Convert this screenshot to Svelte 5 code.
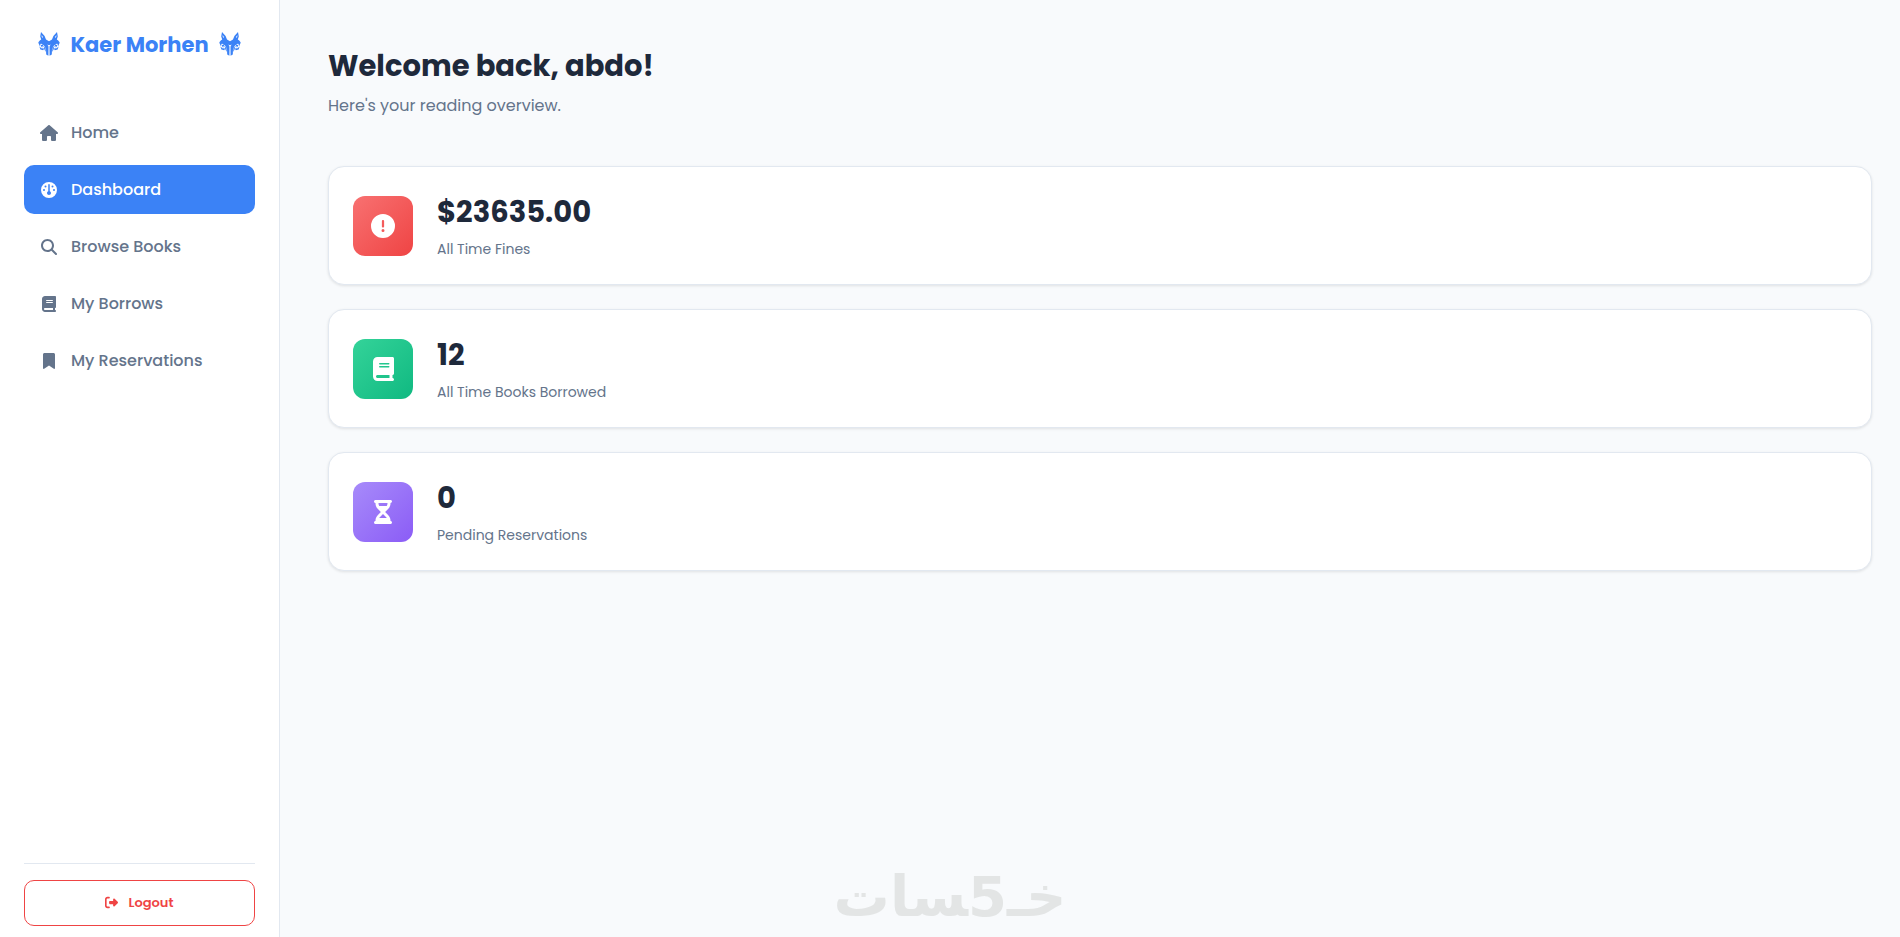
<script>
  const icons = {
    home: {
      w: 576,
      d: 'M575.8 255.5c0 18-15 32.1-32 32.1h-32l.7 160.2c0 2.7-.2 5.4-.5 8.1V472c0 22.1-17.9 40-40 40H456c-1.1 0-2.2 0-3.3-.1c-1.4 .1-2.8 .1-4.2 .1H416 392c-22.1 0-40-17.9-40-40V448 384c0-17.7-14.3-32-32-32H256c-17.7 0-32 14.3-32 32v64 24c0 22.1-17.9 40-40 40H160 128.1c-1.5 0-3-.1-4.5-.2c-1.2 .1-2.4 .2-3.6 .2H104c-22.1 0-40-17.9-40-40V360c0-.9 0-1.9 .1-2.8V287.6H32c-18 0-32-14-32-32.1c0-9 3-17 10-24L266.4 8c7-7 15-8 22-8s15 2 21 7L564.8 231.5c8 7 12 15 11 24z'
    },
    gauge: {
      w: 512,
      d: 'M0 256a256 256 0 1 1 512 0A256 256 0 1 1 0 256zM256 416c35.3 0 64-28.7 64-64c0-26.9-16.5-49.9-40-59.3V88c0-13.3-10.7-24-24-24s-24 10.7-24 24V292.7c-23.5 9.5-40 32.5-40 59.3c0 35.3 28.7 64 64 64zM176 144a32 32 0 1 0 -64 0 32 32 0 1 0 64 0zM96 288a32 32 0 1 0 0-64 32 32 0 1 0 0 64zM448 256a32 32 0 1 0 -64 0 32 32 0 1 0 64 0zM368 176a32 32 0 1 0 0-64 32 32 0 1 0 0 64z'
    },
    search: {
      w: 512,
      d: 'M416 208c0 45.9-14.9 88.3-40 122.7L502.6 457.4c12.5 12.5 12.5 32.8 0 45.3s-32.8 12.5-45.3 0L330.7 376c-34.4 25.2-76.8 40-122.7 40C93.1 416 0 322.9 0 208S93.1 0 208 0S416 93.1 416 208zM208 352a144 144 0 1 0 0-288 144 144 0 1 0 0 288z'
    },
    book: {
      w: 448,
      d: 'M96 0C43 0 0 43 0 96V416c0 53 43 96 96 96H384h32c17.7 0 32-14.3 32-32s-14.3-32-32-32V384c17.7 0 32-14.3 32-32V32c0-17.7-14.3-32-32-32H384 96zm0 384H352v64H96c-17.7 0-32-14.3-32-32s14.3-32 32-32zm32-240c0-8.8 7.2-16 16-16H336c8.8 0 16 7.2 16 16s-7.2 16-16 16H144c-8.8 0-16-7.2-16-16zm16 48H336c8.8 0 16 7.2 16 16s-7.2 16-16 16H144c-8.8 0-16-7.2-16-16s7.2-16 16-16z'
    },
    bookmark: {
      w: 384,
      d: 'M0 48V487.7C0 501.1 10.9 512 24.3 512c5 0 9.9-1.5 14-4.4L192 400 345.7 507.6c4.1 2.9 9 4.4 14 4.4c13.4 0 24.3-10.9 24.3-24.3V48c0-26.5-21.5-48-48-48H48C21.5 0 0 21.5 0 48z'
    },
    alert: {
      w: 512,
      d: 'M256 512A256 256 0 1 0 256 0a256 256 0 1 0 0 512zm0-384c13.3 0 24 10.7 24 24V264c0 13.3-10.7 24-24 24s-24-10.7-24-24V152c0-13.3 10.7-24 24-24zM224 352a32 32 0 1 1 64 0 32 32 0 1 1 -64 0z'
    },
    hourglass: {
      w: 384,
      d: 'M32 0C14.3 0 0 14.3 0 32S14.3 64 32 64V75c0 42.4 16.9 83.1 46.9 113.1L146.7 256 78.9 323.9C48.9 353.9 32 394.6 32 437v11c-17.7 0-32 14.3-32 32s14.3 32 32 32H64 320h32c17.7 0 32-14.3 32-32s-14.3-32-32-32V437c0-42.4-16.9-83.1-46.9-113.1L237.3 256l67.9-67.9c30-30 46.9-70.7 46.9-113.1V64c17.7 0 32-14.3 32-32s-14.3-32-32-32H320 64 32zM96 75V64H288V75c0 19-5.6 37.4-16 53H112c-10.3-15.6-16-34-16-53zm16 309c3.5-5.3 7.6-10.3 12.1-14.9L192 301.3l67.9 67.9c4.6 4.6 8.6 9.6 12.1 14.9H112z'
    },
    logout: {
      w: 512,
      d: 'M377.9 105.9L500.7 228.7c7.2 7.2 11.3 17.1 11.3 27.3s-4.1 20.1-11.3 27.3L377.9 406.1c-6.4 6.4-15 9.9-24 9.9c-18.7 0-33.9-15.2-33.9-33.9l0-62.1-128 0c-17.7 0-32-14.3-32-32l0-64c0-17.7 14.3-32 32-32l128 0 0-62.1c0-18.7 15.2-33.9 33.9-33.9c9 0 17.6 3.6 24 9.9zM160 96L96 96c-17.7 0-32 14.3-32 32l0 256c0 17.7 14.3 32 32 32l64 0c17.7 0 32 14.3 32 32s-14.3 32-32 32l-64 0c-53 0-96-43-96-96L0 128C0 75 43 32 96 32l64 0c17.7 0 32 14.3 32 32s-14.3 32-32 32z'
    }
  };

  const links = [
    { label: 'Home', icon: 'home' },
    { label: 'Dashboard', icon: 'gauge', active: true },
    { label: 'Browse Books', icon: 'search' },
    { label: 'My Borrows', icon: 'book' },
    { label: 'My Reservations', icon: 'bookmark' }
  ];

  const stats = [
    { value: '$23635.00', label: 'All Time Fines', icon: 'alert', tone: 'red' },
    { value: '12', label: 'All Time Books Borrowed', icon: 'book', tone: 'green' },
    { value: '0', label: 'Pending Reservations', icon: 'hourglass', tone: 'violet' }
  ];
</script>

{#snippet icon(name)}
  <svg class="icon" viewBox="0 0 {icons[name].w} 512" aria-hidden="true"><path d={icons[name].d} /></svg>
{/snippet}

{#snippet wolfHalf()}
  <path d="M3 0 L6.6 4 L8 7.4 L11 9.2 L11 13.2 L9.4 12.6 L10.5 14.4 L10.4 23.8 L8.2 22.6 L8 17 L6 13.4 L3 11.4 L0.2 10.6 L1.8 8.6 L3.2 7.6 L2.2 4.4 Z M3.7 3 L3.7 4.8 L4.5 6 L4.9 5 Z" />
  <path d="M0.2 10.4 L3.8 11.6 L2.2 12.6 L2 14.4 Z M2.6 13.2 L4.6 12.4 L5.8 14.8 L4.2 14.2 L4.2 16 Z M1.4 14.4 L3.4 16.2 L6.2 16.4 L5.2 18.2 L2.4 17.4 Z M5.8 14.4 L7.6 16.2 L7.8 20 L6.4 17.6 Z" />
{/snippet}

{#snippet wolf()}
  <svg class="wolf" viewBox="0 0 22 24" aria-hidden="true">
    <g>{@render wolfHalf()}</g>
    <g transform="matrix(-1 0 0 1 22 0)">{@render wolfHalf()}</g>
  </svg>
{/snippet}

<div class="layout">
  <aside class="sidebar">
    <div class="brand">
      {@render wolf()}
      <span>Kaer Morhen</span>
      {@render wolf()}
    </div>

    <nav>
      {#each links as link}
        <a href="#{link.icon}" class:active={link.active} aria-current={link.active ? 'page' : undefined}>
          <span class="slot">{@render icon(link.icon)}</span>
          {link.label}
        </a>
      {/each}
    </nav>

    <div class="foot">
      <button type="button" class="logout">
        {@render icon('logout')}
        Logout
      </button>
    </div>
  </aside>

  <main>
    <header>
      <h1>Welcome back, abdo!</h1>
      <p>Here's your reading overview.</p>
    </header>

    <section class="stats">
      {#each stats as stat}
        <article class="card">
          <div class="tile {stat.tone}">{@render icon(stat.icon)}</div>
          <div>
            <div class="value">{stat.value}</div>
            <div class="label">{stat.label}</div>
          </div>
        </article>
      {/each}
    </section>
  </main>

  <div class="watermark" lang="ar" dir="rtl"><span>خـ</span><span>5</span><span>&zwj;سات</span></div>
</div>

<style>
  :global(body) {
    background: #f8fafc;
  }

  .layout {
    display: flex;
    min-height: 100vh;
    position: relative;
    font-family: Poppins, Inter, 'Open Sans', sans-serif;
    color: #1e293b;
  }

  .sidebar {
    box-sizing: border-box;
    width: 280px;
    flex: none;
    display: flex;
    flex-direction: column;
    padding: 24px 24px 11px;
    background: #fff;
    border-right: 1px solid #e2e8f0;
  }

  .brand {
    display: flex;
    align-items: center;
    justify-content: center;
    gap: 10px;
    height: 40px;
    margin-bottom: 44px;
    color: #3b82f6;
    font-size: 21px;
    font-weight: 700;
    white-space: nowrap;
  }

  .wolf {
    width: 22px;
    height: 24px;
    fill: currentColor;
  }

  .wolf path {
    fill-rule: evenodd;
  }

  .icon {
    height: 16px;
    fill: currentColor;
    display: block;
  }

  nav {
    display: flex;
    flex-direction: column;
    gap: 8px;
  }

  nav a {
    display: flex;
    align-items: center;
    gap: 13px;
    height: 49px;
    padding: 0 16px;
    border-radius: 10px;
    color: #64748b;
    font-size: 16px;
    font-weight: 500;
    text-decoration: none;
  }

  nav a.active {
    background: #3b82f6;
    color: #fff;
  }

  .slot {
    width: 18px;
    display: flex;
    justify-content: center;
  }

  .foot {
    margin-top: auto;
    padding-top: 16px;
    border-top: 1px solid #e2e8f0;
  }

  .logout {
    display: flex;
    align-items: center;
    justify-content: center;
    gap: 10px;
    width: 100%;
    height: 46px;
    padding-bottom: 2px;
    border: 1px solid #ef4444;
    border-radius: 10px;
    background: transparent;
    color: #ef4444;
    font-family: inherit;
    font-size: 13px;
    font-weight: 600;
    cursor: pointer;
  }

  .logout .icon {
    height: 13px;
  }

  main {
    flex: 1;
    min-width: 0;
    padding: 44px 28px 48px 48px;
  }

  h1 {
    margin: 0;
    font-size: 29px;
    line-height: 44px;
    font-weight: 700;
  }

  header p {
    margin: 4px 0 0;
    font-size: 16px;
    line-height: 28px;
    color: #64748b;
  }

  .stats {
    display: flex;
    flex-direction: column;
    gap: 24px;
    margin-top: 46px;
  }

  .card {
    display: flex;
    align-items: center;
    gap: 24px;
    padding: 24px;
    background: #fff;
    border: 1px solid #e2e8f0;
    border-radius: 16px;
    box-shadow: 0 1px 3px rgba(0, 0, 0, 0.1);
  }

  .tile {
    display: flex;
    align-items: center;
    justify-content: center;
    width: 60px;
    height: 60px;
    border-radius: 12px;
    color: #fff;
  }

  .tile .icon {
    height: 24px;
  }

  .red {
    background: linear-gradient(135deg, #f87171, #ef4444);
  }

  .green {
    background: linear-gradient(135deg, #34d399, #10b981);
  }

  .violet {
    background: linear-gradient(135deg, #a78bfa, #8b5cf6);
  }

  .value {
    font-size: 29px;
    line-height: 42px;
    font-weight: 700;
  }

  .label {
    margin-top: 6px;
    font-size: 14px;
    line-height: 21px;
    color: #64748b;
  }

  .watermark {
    position: absolute;
    bottom: 2px;
    left: 50%;
    transform: translateX(-50%);
    display: flex;
    align-items: baseline;
    font-family: 'DejaVu Sans', sans-serif;
    font-size: 56px;
    line-height: 76px;
    font-weight: 700;
    color: #e3e5e5;
    white-space: nowrap;
    pointer-events: none;
  }
</style>
